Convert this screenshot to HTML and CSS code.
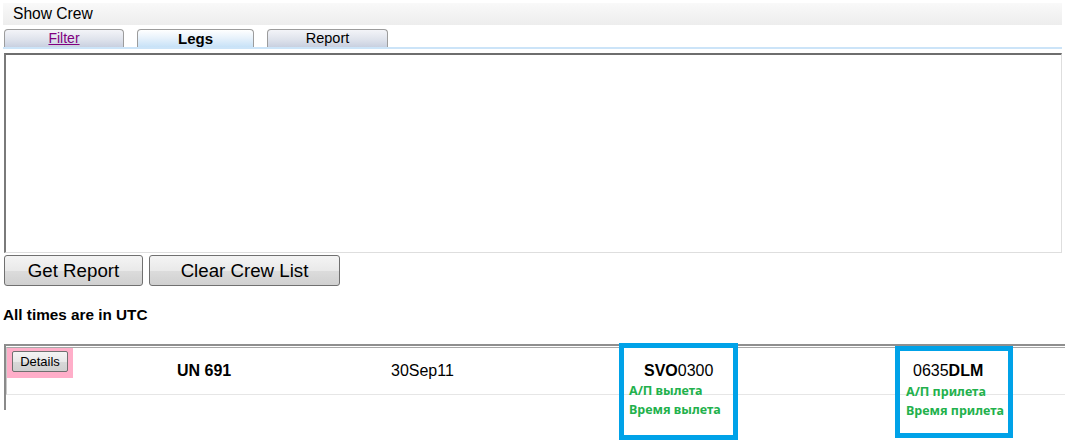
FILE: index.html
```html
<!DOCTYPE html>
<html>
<head>
<meta charset="utf-8">
<link rel="stylesheet" href="styles.css">
</head>
<body>
<div class="page">
  <div class="titlebar">Show Crew</div>
  <div class="tabs">
    <div class="tab"><a href="#" class="tab-link">Filter</a></div>
    <div class="tab tab-active">Legs</div>
    <div class="tab tab-report">Report</div>
  </div>
  <div class="tabline"></div>
  <div class="panel"></div>
  <div class="actions">
    <button class="btn btn-get">Get Report</button>
    <button class="btn btn-clear">Clear Crew List</button>
  </div>
  <div class="note">All times are in UTC</div>
  <div class="grid">
    <div class="row">
      <div class="cell cell-details"></div>
      <div class="cell cell-flight">UN 691</div>
      <div class="cell cell-date">30Sep11</div>
      <div class="cell cell-dep"><b>SVO</b>0300</div>
      <div class="cell cell-arr">0635<b>DLM</b></div>
    </div>
    <div class="hl-pink"><button class="btn-details">Details</button></div>
    <div class="hl-blue hl-dep">
      <div class="hint hint-1">А/П вылета</div>
      <div class="hint">Время вылета</div>
    </div>
    <div class="hl-blue hl-arr">
      <div class="hint hint-1">А/П прилета</div>
      <div class="hint">Время прилета</div>
    </div>
  </div>
</div>
</body>
</html>
```

FILE: styles.css
```css
html, body {
  margin: 0;
  padding: 0;
  background: #ffffff;
}
body {
  font-family: "Liberation Sans", Arial, sans-serif;
  color: #000;
}
.page {
  width: 1065px;
  height: 448px;
  overflow: hidden;
  padding-top: 3px;
  box-sizing: border-box;
}
.titlebar {
  margin: 0 3px;
  height: 22px;
  line-height: 22px;
  padding-left: 10px;
  font-size: 15.6px;
  background: linear-gradient(#f9f9f9, #ededed);
}
.tabs {
  display: flex;
  gap: 13px;
  margin: 4px 0 0 4px;
  height: 18px;
}
.tab {
  box-sizing: border-box;
  width: 120px;
  height: 18px;
  border: 1px solid #9c9c9c;
  border-bottom: none;
  border-radius: 4px 4px 0 0;
  background: linear-gradient(#f3f4f8, #dfe3ec 55%, #c9d0e0);
  text-align: center;
  font-size: 14.5px;
  line-height: 17px;
}
.tab-link {
  color: #800080;
  text-decoration: underline;
  font-size: 14px;
}
.tab-active {
  width: 117px;
  font-weight: bold;
  font-size: 15px;
  background: linear-gradient(#ffffff, #e6f1fb 50%, #c8e2f7);
}
.tab-report {
  width: 121px;
}
.tabline {
  margin: 0 3px;
  height: 2px;
  background: #cce4f8;
}
.panel {
  box-sizing: border-box;
  margin: 4px 3px 0 4px;
  height: 200px;
  border-top: 2px solid #6e6e6e;
  border-left: 2px solid #7a7a7a;
  border-bottom: 1px solid #dedede;
  border-right: 1px solid #dedede;
}
.actions {
  display: flex;
  gap: 6px;
  margin: 2px 0 0 4px;
}
.btn {
  box-sizing: border-box;
  height: 31px;
  border: 1px solid #707070;
  border-radius: 3px;
  background: linear-gradient(#f4f4f4, #e9e9e9 50%, #dcdcdc 51%, #d0d0d0);
  font-family: "Liberation Sans", Arial, sans-serif;
  font-size: 18.7px;
  color: #000;
  padding: 0;
}
.btn-get {
  width: 139px;
}
.btn-clear {
  width: 191px;
}
.note {
  margin: 21px 0 0 3px;
  font-weight: bold;
  font-size: 15.3px;
  line-height: 16px;
}
.grid {
  position: relative;
  margin: 21px 0 0 4px;
  height: 64px;
  border-top: 2px solid #8f8f8f;
  border-left: 2px solid #8a8a8a;
}
.row {
  display: grid;
  grid-template-columns: 170px 214px 253px 269px 1fr;
  margin-top: 1px;
  height: 46px;
  border-top: 1px solid #a8a8a8;
  border-left: 1px solid #c9c9c9;
  border-bottom: 1px solid #e6e6e6;
  font-size: 16px;
  line-height: 18px;
}
.cell {
  padding-top: 14px;
  white-space: nowrap;
}
.cell-flight {
  font-weight: bold;
}
.hl-pink {
  position: absolute;
  left: 1px;
  top: 2px;
  width: 66px;
  height: 30px;
  background: #ffaec9;
  box-sizing: border-box;
  padding: 3px 0 0 5px;
}
.btn-details {
  display: block;
  box-sizing: border-box;
  width: 56px;
  height: 21px;
  padding: 0;
  border: 1px solid #707070;
  border-radius: 2px;
  background: linear-gradient(#f4f4f4, #e8e8e8 50%, #d8d8d8 51%, #cfcfcf);
  font-family: "Liberation Sans", Arial, sans-serif;
  font-size: 13px;
  color: #000;
  line-height: 17px;
}
.hl-blue {
  position: absolute;
  box-sizing: border-box;
  border: 5px solid #00a2e8;
}
.hl-dep {
  left: 613px;
  top: -3px;
  width: 119px;
  height: 97px;
  padding: 33px 0 0 5px;
}
.hl-arr {
  left: 889px;
  top: 0px;
  width: 118px;
  height: 92px;
  padding: 31px 0 0 6px;
}
.hint {
  color: #22b14c;
  font-family: "Noto Sans", "Open Sans", sans-serif;
  font-weight: bold;
  font-size: 12.5px;
  line-height: 19px;
  white-space: nowrap;
}
```
